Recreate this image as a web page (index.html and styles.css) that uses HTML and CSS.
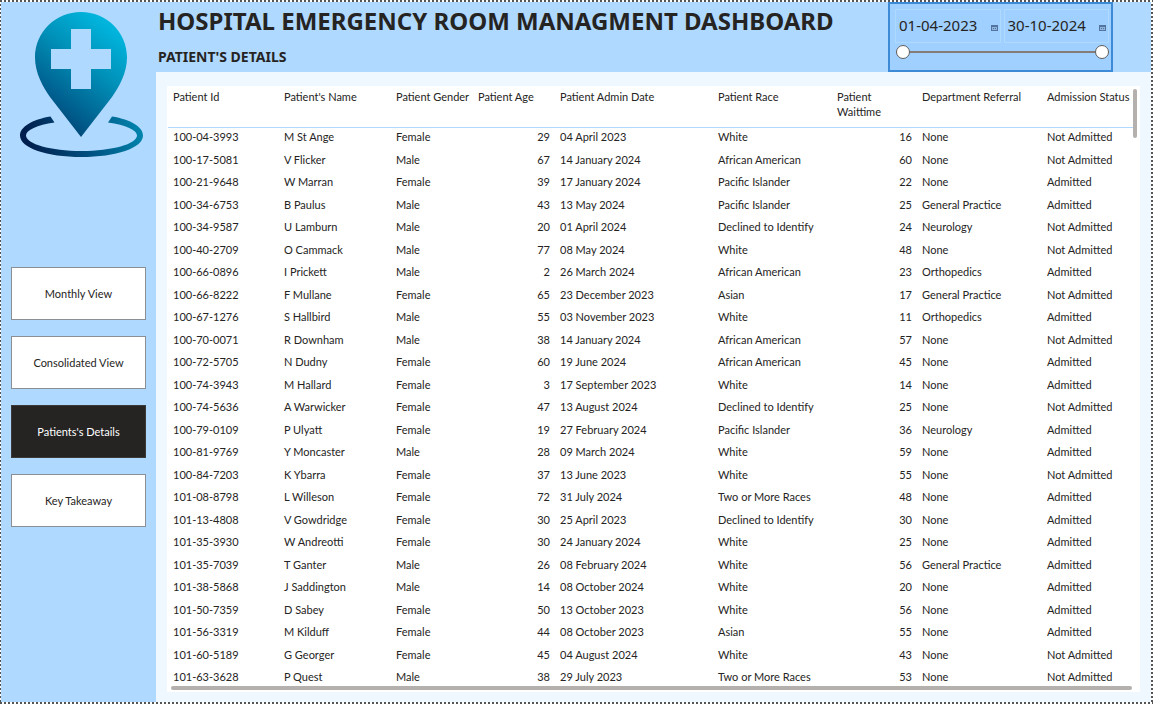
FILE: index.html
```html
<!DOCTYPE html>
<html lang="en">
<head>
<meta charset="utf-8">
<title>Hospital Emergency Room Dashboard</title>
<link rel="stylesheet" href="styles.css">
</head>
<body>
<div class="page">
  <aside class="sidebar">
    <svg class="logo" viewBox="20 12 123 146" role="img" aria-label="Hospital location">
      <defs>
        <linearGradient id="tide" gradientUnits="userSpaceOnUse" x1="120" y1="35" x2="34" y2="148">
          <stop offset="0" stop-color="#00b4dc"/>
          <stop offset="0.3" stop-color="#0090b8"/>
          <stop offset="0.65" stop-color="#005a8a"/>
          <stop offset="1" stop-color="#001f4e"/>
        </linearGradient>
        <linearGradient id="ring" gradientUnits="userSpaceOnUse" x1="143" y1="120" x2="30" y2="150">
          <stop offset="0" stop-color="#0088b0"/>
          <stop offset="0.5" stop-color="#005282"/>
          <stop offset="1" stop-color="#001f4e"/>
        </linearGradient>
      </defs>
      <path fill="url(#tide)" fill-rule="evenodd" d="M81 12C106.500 12 127 32 127 57.500C127 73 119 87 112 97L81 137L50 97C43 87 35 73 35 57.500C35 32 55.500 12 81 12ZM71 29V49H51V69H71V89H91V69H111V49H91V29Z"/>
      <path fill="url(#ring)" d="M50.500 116.500C32 119.500 20 127 20 135.500C20 148 47 157 81.500 157C116 157 143 148 143 135.500C143 127 131 119.500 112 116.500L108 122.500C126 125 137 130 137 135.500C137 144 112 151 81.500 151C51 151 26 144 26 135.500C26 130 37 125 54.500 122.500Z"/>
    </svg>
    <nav class="nav">
      <button class="nav-button" type="button">Monthly View</button>
      <button class="nav-button" type="button">Consolidated View</button>
      <button class="nav-button nav-button-active" type="button" aria-current="page">Patients's Details</button>
      <button class="nav-button" type="button">Key Takeaway</button>
    </nav>
  </aside>
  <div class="content">
    <header class="header">
      <div class="headings">
        <h1 class="title">HOSPITAL EMERGENCY ROOM MANAGMENT DASHBOARD</h1>
        <h2 class="subtitle">PATIENT'S DETAILS</h2>
      </div>
      <div class="slicer">
        <div class="dates">
          <div class="date">
            <input class="date-input" type="text" value="01-04-2023" aria-label="Start date">
            <button class="date-button" type="button" aria-label="Pick start date"><svg class="calendar" viewBox="0 0 7 6"><path fill="#8fb4de" d="M0 0H7V6H0Z"/><path fill="#52749f" d="M0 0H7V2H0ZM0 2H1V6H0ZM6 2H7V6H6ZM1 5H6V6H1ZM2 3H3V4H2ZM4 3H5V4H4Z"/></svg></button>
          </div>
          <div class="date">
            <input class="date-input" type="text" value="30-10-2024" aria-label="End date">
            <button class="date-button" type="button" aria-label="Pick end date"><svg class="calendar" viewBox="0 0 7 6"><path fill="#8fb4de" d="M0 0H7V6H0Z"/><path fill="#52749f" d="M0 0H7V2H0ZM0 2H1V6H0ZM6 2H7V6H6ZM1 5H6V6H1ZM2 3H3V4H2ZM4 3H5V4H4Z"/></svg></button>
          </div>
        </div>
        <div class="range">
          <input class="range-input range-track" type="range" min="0" max="100" value="0" aria-label="Range start">
          <input class="range-input" type="range" min="0" max="100" value="100" aria-label="Range end">
        </div>
      </div>
    </header>
    <main class="main">
      <section class="card">
        <table class="patients">
          <colgroup>
            <col class="c-id"><col class="c-name"><col class="c-gender"><col class="c-age"><col class="c-date"><col class="c-race"><col class="c-wait"><col class="c-dept"><col class="c-status">
          </colgroup>
          <thead>
            <tr><th>Patient Id</th><th>Patient's Name</th><th>Patient Gender</th><th>Patient Age</th><th>Patient Admin Date</th><th>Patient Race</th><th>Patient<br>Waittime</th><th>Department Referral</th><th>Admission Status</th></tr>
          </thead>
          <tbody>
            <tr><td>100-04-3993</td><td>M St Ange</td><td>Female</td><td class="num">29</td><td>04 April 2023</td><td>White</td><td class="num">16</td><td>None</td><td>Not Admitted</td></tr>
            <tr><td>100-17-5081</td><td>V Flicker</td><td>Male</td><td class="num">67</td><td>14 January 2024</td><td>African American</td><td class="num">60</td><td>None</td><td>Not Admitted</td></tr>
            <tr><td>100-21-9648</td><td>W Marran</td><td>Female</td><td class="num">39</td><td>17 January 2024</td><td>Pacific Islander</td><td class="num">22</td><td>None</td><td>Admitted</td></tr>
            <tr><td>100-34-6753</td><td>B Paulus</td><td>Male</td><td class="num">43</td><td>13 May 2024</td><td>Pacific Islander</td><td class="num">25</td><td>General Practice</td><td>Admitted</td></tr>
            <tr><td>100-34-9587</td><td>U Lamburn</td><td>Male</td><td class="num">20</td><td>01 April 2024</td><td>Declined to Identify</td><td class="num">24</td><td>Neurology</td><td>Not Admitted</td></tr>
            <tr><td>100-40-2709</td><td>O Cammack</td><td>Male</td><td class="num">77</td><td>08 May 2024</td><td>White</td><td class="num">48</td><td>None</td><td>Not Admitted</td></tr>
            <tr><td>100-66-0896</td><td>I Prickett</td><td>Male</td><td class="num">2</td><td>26 March 2024</td><td>African American</td><td class="num">23</td><td>Orthopedics</td><td>Admitted</td></tr>
            <tr><td>100-66-8222</td><td>F Mullane</td><td>Female</td><td class="num">65</td><td>23 December 2023</td><td>Asian</td><td class="num">17</td><td>General Practice</td><td>Not Admitted</td></tr>
            <tr><td>100-67-1276</td><td>S Hallbird</td><td>Male</td><td class="num">55</td><td>03 November 2023</td><td>White</td><td class="num">11</td><td>Orthopedics</td><td>Admitted</td></tr>
            <tr><td>100-70-0071</td><td>R Downham</td><td>Male</td><td class="num">38</td><td>14 January 2024</td><td>African American</td><td class="num">57</td><td>None</td><td>Not Admitted</td></tr>
            <tr><td>100-72-5705</td><td>N Dudny</td><td>Female</td><td class="num">60</td><td>19 June 2024</td><td>African American</td><td class="num">45</td><td>None</td><td>Admitted</td></tr>
            <tr><td>100-74-3943</td><td>M Hallard</td><td>Female</td><td class="num">3</td><td>17 September 2023</td><td>White</td><td class="num">14</td><td>None</td><td>Admitted</td></tr>
            <tr><td>100-74-5636</td><td>A Warwicker</td><td>Female</td><td class="num">47</td><td>13 August 2024</td><td>Declined to Identify</td><td class="num">25</td><td>None</td><td>Not Admitted</td></tr>
            <tr><td>100-79-0109</td><td>P Ulyatt</td><td>Female</td><td class="num">19</td><td>27 February 2024</td><td>Pacific Islander</td><td class="num">36</td><td>Neurology</td><td>Admitted</td></tr>
            <tr><td>100-81-9769</td><td>Y Moncaster</td><td>Male</td><td class="num">28</td><td>09 March 2024</td><td>White</td><td class="num">59</td><td>None</td><td>Admitted</td></tr>
            <tr><td>100-84-7203</td><td>K Ybarra</td><td>Female</td><td class="num">37</td><td>13 June 2023</td><td>White</td><td class="num">55</td><td>None</td><td>Not Admitted</td></tr>
            <tr><td>101-08-8798</td><td>L Willeson</td><td>Female</td><td class="num">72</td><td>31 July 2024</td><td>Two or More Races</td><td class="num">48</td><td>None</td><td>Admitted</td></tr>
            <tr><td>101-13-4808</td><td>V Gowdridge</td><td>Female</td><td class="num">30</td><td>25 April 2023</td><td>Declined to Identify</td><td class="num">30</td><td>None</td><td>Admitted</td></tr>
            <tr><td>101-35-3930</td><td>W Andreotti</td><td>Female</td><td class="num">30</td><td>24 January 2024</td><td>White</td><td class="num">25</td><td>None</td><td>Admitted</td></tr>
            <tr><td>101-35-7039</td><td>T Ganter</td><td>Male</td><td class="num">26</td><td>08 February 2024</td><td>White</td><td class="num">56</td><td>General Practice</td><td>Admitted</td></tr>
            <tr><td>101-38-5868</td><td>J Saddington</td><td>Male</td><td class="num">14</td><td>08 October 2024</td><td>White</td><td class="num">20</td><td>None</td><td>Admitted</td></tr>
            <tr><td>101-50-7359</td><td>D Sabey</td><td>Female</td><td class="num">50</td><td>13 October 2023</td><td>White</td><td class="num">56</td><td>None</td><td>Admitted</td></tr>
            <tr><td>101-56-3319</td><td>M Kilduff</td><td>Female</td><td class="num">44</td><td>08 October 2023</td><td>Asian</td><td class="num">55</td><td>None</td><td>Admitted</td></tr>
            <tr><td>101-60-5189</td><td>G Georger</td><td>Female</td><td class="num">45</td><td>04 August 2024</td><td>White</td><td class="num">43</td><td>None</td><td>Not Admitted</td></tr>
            <tr><td>101-63-3628</td><td>P Quest</td><td>Male</td><td class="num">38</td><td>29 July 2023</td><td>Two or More Races</td><td class="num">53</td><td>None</td><td>Not Admitted</td></tr>
          </tbody>
        </table>
        <div class="scroll-y"></div>
        <div class="scroll-x"></div>
      </section>
    </main>
  </div>
</div>
</body>
</html>
```
FILE: styles.css
```css
* {
  box-sizing: border-box;
}

body {
  margin: 0;
  font-family: Lato, "Open Sans", sans-serif;
  font-size: 11px;
  color: #252423;
}

/* Dotted canvas outline drawn as 2px squares along each edge */
.page {
  display: flex;
  min-height: 100vh;
  padding: 2px 2px 2px 1px;
  background:
    repeating-linear-gradient(90deg, #555 0 2px, #fff 2px 4px) top / 100% 2px no-repeat,
    repeating-linear-gradient(90deg, #555 0 2px, #fff 2px 4px) bottom / 100% 2px no-repeat,
    repeating-linear-gradient(180deg, #555 0 2px, #fff 2px 4px) left / 1px 100% no-repeat,
    repeating-linear-gradient(180deg, #555 0 2px, #fff 2px 4px) right / 2px 100% no-repeat;
}

.sidebar {
  flex: none;
  width: 155px;
  padding: 10px;
  background: #b0d9ff;
}

.logo {
  display: block;
  width: 123px;
  height: 146px;
  margin-left: 9px;
}

.nav {
  display: flex;
  flex-direction: column;
  gap: 16px;
  margin-top: 109px;
}

.nav-button {
  height: 53px;
  padding: 0;
  border: 1px solid #8a8f96;
  background: #fff;
  color: #252423;
  font: inherit;
}

.nav-button-active {
  border-color: #3b3a39;
  background: #252423;
  color: #fff;
}

.content {
  flex: 1;
  min-width: 0;
  display: flex;
  flex-direction: column;
  background: #f0f8ff;
}

.header {
  display: flex;
  justify-content: space-between;
  padding-right: 38px;
  background: #b0d9ff;
  font-family: "Noto Sans", "Open Sans", sans-serif;
}

.headings {
  padding: 3px 2px;
}

.title {
  margin: 0;
  font-size: 24px;
  line-height: 32px;
  font-weight: 700;
  white-space: nowrap;
}

.subtitle {
  margin: 8px 0 0;
  font-size: 14px;
  line-height: 24px;
  font-weight: 700;
}

.slicer {
  flex: none;
  width: 225px;
  height: 70px;
  padding: 5px 2px 0 5px;
  border: 2px solid #3d8bd6;
  background: #a0d0ff;
}

.dates {
  display: flex;
  gap: 3px;
}

.date {
  flex: 1;
  min-width: 0;
  display: flex;
  align-items: center;
  height: 34px;
  padding: 0 2px 0 3px;
  border: 1px solid #b0d9ff;
}

.date-input {
  flex: 1;
  min-width: 0;
  height: 32px;
  padding: 0 0 2px;
  border: 0;
  background: none;
  color: #252423;
  font: inherit;
  font-size: 15px;
}

.date-button {
  padding: 4px 0 0;
  border: 0;
  background: none;
}

.calendar {
  display: block;
  width: 7px;
  height: 6px;
}

.range {
  display: grid;
  padding: 1px 0 0 1px;
}

.range-input {
  grid-area: 1 / 1;
  width: 100%;
  height: 15px;
  margin: 0;
  appearance: none;
  background: none;
  pointer-events: none;
}

.range-track {
  background: linear-gradient(#857b78, #857b78) center / 100% 2px no-repeat;
}

.range-input::-webkit-slider-thumb {
  appearance: none;
  width: 14px;
  height: 14px;
  border: 1px solid #605e5c;
  border-radius: 50%;
  background: #fff;
  pointer-events: auto;
}

.main {
  flex: 1;
  padding: 14px 11px 10px;
}

.card {
  display: grid;
  grid-template-columns: 1fr 4px;
  row-gap: 1px;
  padding: 0 3px 2px 1px;
  background: #fff;
}

.patients {
  width: 100%;
  table-layout: fixed;
  border-collapse: separate;
  border-spacing: 0;
  line-height: 15px;
}

.c-id { width: 111px; }
.c-name { width: 112px; }
.c-gender { width: 82px; }
.c-age { width: 82px; }
.c-date { width: 158px; }
.c-race { width: 119px; }
.c-wait { width: 85px; }
.c-dept { width: 125px; }
.c-status { width: 91px; }

.patients th {
  height: 42px;
  padding: 3px 0 0 5px;
  border-bottom: 1px solid #b0d9ff;
  font-weight: 400;
  text-align: left;
  vertical-align: top;
  white-space: nowrap;
}

.patients td {
  height: 22px;
  padding: 1px 0 0 5px;
  vertical-align: top;
  white-space: nowrap;
}

.patients tr:nth-child(odd) td {
  height: 23px;
}

.patients tr:last-child td {
  height: 17px;
}

.patients .num {
  padding-right: 5px;
  text-align: right;
}

.scroll-y,
.scroll-x {
  border-radius: 2px;
  background: #b3b0ad;
}

.scroll-y {
  height: 49px;
  margin-top: 3px;
}

.scroll-x {
  height: 4px;
  margin: 0 1px 0 3px;
}
```
